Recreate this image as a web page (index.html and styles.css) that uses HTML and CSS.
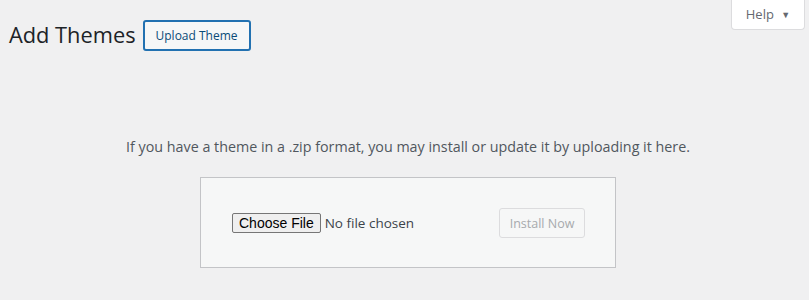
FILE: index.html
```html
<!DOCTYPE html>
<html lang="en">
<head>
  <meta charset="UTF-8">
  <title>Add Themes</title>
  <link rel="stylesheet" href="styles.css">
</head>
<body>
  <div class="help-bar">
    <button class="help-tab" type="button">Help <span class="arrow">&#9660;</span></button>
  </div>
  <div class="wrap">
    <div class="heading">
      <h1>Add Themes</h1>
      <button class="upload-btn" type="button">Upload Theme</button>
    </div>

    <!-- Upload panel -->
    <div class="upload-theme">
      <p class="install-help">If you have a theme in a .zip format, you may install or update it by uploading it here.</p>
      <form class="upload-form" method="post" action="/">
        <input type="file" id="themezip" name="themezip">
        <button class="install-btn" type="submit" disabled>Install Now</button>
      </form>
    </div>
  </div>
</body>
</html>
```

FILE: styles.css
```css
body {
  background: #f0f0f1;
  color: #3c434a;
  font-family: "Open Sans", sans-serif;
  font-size: 13px;
  margin: 0;
  height: 300px;
  overflow: hidden;
}
.help-bar {
  display: flex;
  justify-content: flex-end;
  padding-right: 4px;
}
.help-tab {
  background: #fff;
  border: 1px solid #dcdcde;
  border-top: none;
  border-radius: 0 0 4px 4px;
  color: #646970;
  font-family: "Open Sans", sans-serif;
  font-size: 13px;
  width: 74px;
  height: 30px;
  padding: 0 0 2px;
}
.help-tab .arrow {
  font-size: 9px;
  margin-left: 4px;
  vertical-align: 1px;
}
.wrap {
  margin-top: -30px;
  padding: 0 9px;
}
.heading {
  display: flex;
  align-items: center;
  gap: 7px;
  padding-top: 19px;
}
h1 {
  font-size: 21.8px;
  font-weight: 400;
  color: #1d2327;
  margin: 0;
  line-height: 32px;
}
.upload-btn {
  background: #f6f7f7;
  border: 2px solid #2271b1;
  border-radius: 3px;
  color: #0a4b78;
  font-family: "Open Sans", sans-serif;
  font-size: 12px;
  height: 31px;
  width: 108px;
  padding: 0;
}
.upload-theme {
  padding-top: 86px;
  padding-left: 7px;
}
.install-help {
  text-align: center;
  font-size: 14.3px;
  color: #50575e;
  margin: 0 0 21px;
}
.upload-form {
  width: 353px;
  margin: 0 auto;
  padding: 30px 30px 29px 31px;
  background: #f6f7f7;
  border: 1px solid #c3c4c7;
  display: flex;
  align-items: center;
  justify-content: space-between;
}
input[type="file"] {
  font-family: "Open Sans", sans-serif;
  font-size: 13.5px;
  color: #3c434a;
}
input[type="file"]::file-selector-button {
  font-family: "Liberation Sans", Arial, sans-serif;
  font-size: 14px;
  background: #efefef;
  border: 1px solid #767676;
  border-radius: 2px;
  color: #000;
  padding: 1px 6px;
  margin-right: 4px;
}
.install-btn {
  background: #f6f7f7;
  border: 1px solid #dcdcde;
  border-radius: 3px;
  color: #a7aaad;
  font-family: "Open Sans", sans-serif;
  font-size: 12.5px;
  height: 30px;
  width: 86px;
}
```
